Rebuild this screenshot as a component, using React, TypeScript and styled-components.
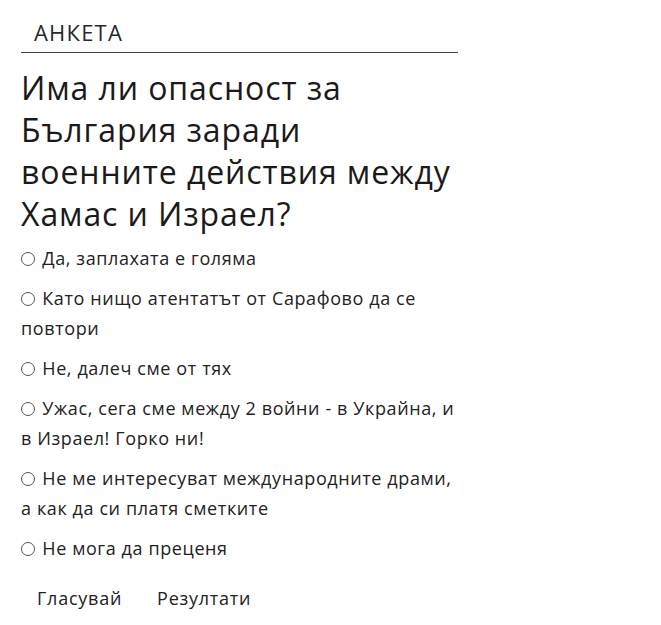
import React from "react";
import styled, { createGlobalStyle } from "styled-components";

const Global = createGlobalStyle`
  body { margin: 0; background: #fff; font-family: "Open Sans", "Noto Sans", sans-serif; color: #222; }
`;

const Widget = styled.section`
  width: 437px;
  padding: 16px 0 0 21px;
`;

const Header = styled.h3`
  margin: 0;
  padding: 2px 0 6px 13px;
  font-size: 22px;
  font-weight: 400;
  letter-spacing: 1.2px;
  line-height: 28px;
  color: #1f2a30;
  border-bottom: 1px solid #37474f;
`;

const Question = styled.h2`
  margin: 14px 0 8px;
  font-size: 32px;
  font-weight: 400;
  letter-spacing: 0.9px;
  line-height: 42px;
  color: #1a1a1a;
`;

const Options = styled.form`
  display: flex;
  flex-direction: column;
  gap: 10px;
`;

const Option = styled.label`
  display: block;
  font-size: 18px;
  letter-spacing: 0.6px;
  line-height: 30px;
  color: #222;
`;

const Radio = styled.input`
  appearance: none;
  width: 14px;
  height: 14px;
  margin: 0 2px 0 0;
  border: 1px solid #555;
  border-radius: 50%;
  vertical-align: -1px;
  background: #fff;
`;

const Actions = styled.div`
  display: flex;
  gap: 35px;
  padding: 20px 0 0 16px;
`;

const Button = styled.button`
  border: none;
  background: none;
  padding: 0;
  font-family: inherit;
  font-size: 18px;
  letter-spacing: 0.75px;
  line-height: 30px;
  color: #222;
`;

const options = [
  "Да, заплахата е голяма",
  "Като нищо атентатът от Сарафово да се повтори",
  "Не, далеч сме от тях",
  "Ужас, сега сме между 2 войни - в Украйна, и в Израел! Горко ни!",
  "Не ме интересуват международните драми, а как да си платя сметките",
  "Не мога да преценя",
];

export default function App() {
  return (
    <>
      <Global />
      <Widget>
        <Header>АНКЕТА</Header>
        <Question>Има ли опасност за България заради военните действия между Хамас и Израел?</Question>
        <Options>
          {options.map((o) => (
            <Option key={o}>
              <Radio type="radio" name="poll" /> {o}
            </Option>
          ))}
        </Options>
        <Actions>
          <Button type="button">Гласувай</Button>
          <Button type="button">Резултати</Button>
        </Actions>
      </Widget>
    </>
  );
}
